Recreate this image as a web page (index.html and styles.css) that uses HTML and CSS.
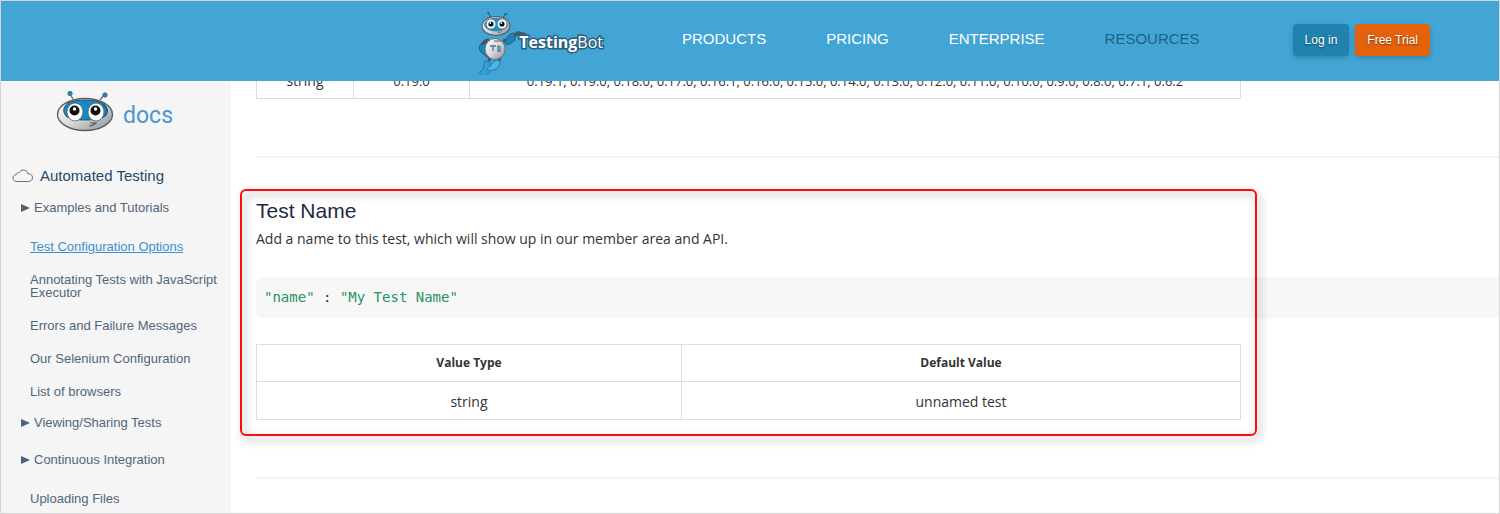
FILE: index.html
```html
<!DOCTYPE html>
<html lang="en">
<head>
<meta charset="utf-8">
<title>TestingBot docs - Test Name</title>
<link rel="stylesheet" href="styles.css">
</head>
<body>
<div class="frame">
  <header class="topbar">
    <a class="brand" href="#">
      <svg class="brand-bot" width="50" height="66" viewBox="2 0 50 66" aria-hidden="true">
        <defs>
          <linearGradient id="metal" x1="0" y1="0" x2="1" y2="1"><stop offset="0" stop-color="#fff"/><stop offset=".5" stop-color="#d8dadb"/><stop offset="1" stop-color="#898f93"/></linearGradient>
        </defs>
        <g fill="none" stroke="#4a5a64" stroke-width="1.2"><path d="M15 9 13 5M27 9l2-4"/></g>
        <circle cx="12.500" cy="4" r="1.300" fill="#286f98"/><circle cx="30" cy="5" r="1.300" fill="#286f98"/>
        <path d="M13 31c-4 1-7 4-7 7" fill="none" stroke="#435662" stroke-width="4"/>
        <path d="M5 35c-3 2-2 7 1 9l6 5c1-3-1-8-2-13z" fill="#1c83bd" stroke="#3c5868"/>
        <path d="M27 31c4 2 7 1 9-2l6-5 8 2" fill="none" stroke="#435662" stroke-width="3.500"/>
        <path d="M29 35c3 2 7-1 10-4l-1-7c-5 0-8 5-9 11z" fill="#1c83bd" stroke="#3c5868"/>
        <path d="M14 48l-1 4M24 48l-1 4" stroke="#435662" stroke-width="3"/>
        <ellipse cx="19" cy="40" rx="10" ry="10.500" fill="url(#metal)" stroke="#69747b"/>
        <path d="M14 37h6m-3 0v5m5-5v5h2v-4z" fill="none" stroke="#427b99" stroke-width="1.300"/>
        <path d="M18 32h7" stroke="#5a6166"/>
        <path d="M8 53c4-2 7 0 6 3l-1 5c2 1 0 5-4 6-4 0-6-2-5-4s4-2 4-5z" fill="#29a3e0" stroke="#3c6f8d"/>
        <path d="M18 52c4-2 7 0 6 3s-3 4-4 5-5 2-8 1c-2-1 0-3 2-4z" fill="#42b6ee" stroke="#3c6f8d"/>
        <ellipse cx="20" cy="17" rx="14" ry="9.500" fill="url(#metal)" stroke="#505c63" stroke-width="1.200"/>
        <ellipse cx="20" cy="15.500" rx="11.500" ry="6.500" fill="#238fc5" stroke="#52646f" stroke-width=".7"/>
        <circle cx="15" cy="15" r="4.500" fill="#fff"/><circle cx="26" cy="15" r="4.500" fill="#fff"/>
        <circle cx="15" cy="15" r="2.600" fill="#111"/><circle cx="26" cy="15" r="2.600" fill="#111"/>
        <circle cx="14.300" cy="14" r=".9" fill="#fff"/><circle cx="25.300" cy="14" r=".9" fill="#fff"/>
        <path d="M22 23.500c2 0 3-1 4-2" stroke="#777" fill="none"/>
      </svg>
      <span class="brand-name"><b>Testing</b>Bot</span>
    </a>
    <nav class="menu" aria-label="Main">
      <a href="#">PRODUCTS</a>
      <a href="#">PRICING</a>
      <a href="#">ENTERPRISE</a>
      <a class="current" href="#">RESOURCES</a>
    </nav>
    <div class="account">
      <button class="btn btn-login" type="button">Log in</button>
      <button class="btn btn-trial" type="button">Free Trial</button>
    </div>
  </header>

  <div class="layout">
    <aside class="sidebar">
      <a class="docs-home" href="#">
        <svg width="58" height="42" viewBox="0 0 58 42" aria-hidden="true">
          <path d="M17 9 14 4M44 10l4-5" fill="none" stroke="#68737a" stroke-width="1.400"/>
          <circle cx="14" cy="3.500" r="2.200" fill="#1c8cc4" stroke="#4d5b63" stroke-width=".8"/>
          <circle cx="49" cy="5" r="2.200" fill="#1c8cc4" stroke="#4d5b63" stroke-width=".8"/>
          <ellipse cx="29" cy="24.500" rx="27.500" ry="16" fill="url(#metal)" stroke="#575f64" stroke-width="1.400"/>
          <path d="M12 13C20 9 38 9 46 13c6 4 6 9 2 14-9 4-29 4-37 0-5-5-4-10 1-14z" fill="#178ac4" stroke="#3c4d57"/>
          <path d="M47 14c5 4 5 8 2 12" fill="none" stroke="#1a5d85" stroke-width="2"/>
          <ellipse cx="19" cy="22" rx="8" ry="9" fill="#fff" stroke="#56616a" stroke-width=".8"/>
          <ellipse cx="40" cy="22" rx="8" ry="9" fill="#fff" stroke="#56616a" stroke-width=".8"/>
          <circle cx="18.500" cy="20.500" r="5" fill="#111"/><circle cx="39.500" cy="20.500" r="5" fill="#111"/>
          <circle cx="18.500" cy="19" r="1.700" fill="#fff"/><circle cx="39.500" cy="19" r="1.700" fill="#fff"/>
          <path d="M33 36c3 0 5-1 7-3m-6 0 7 0" fill="none" stroke="#555" stroke-width="1.100"/>
        </svg>
        <span>docs</span>
      </a>
      <h2 class="group-title">
        <svg width="22" height="14" viewBox="0 0 22 14" aria-hidden="true"><path d="M5 12.500C2.500 12.500 1 11 1 9s1.500-3.300 3.300-3.300C4.600 4 6 3.300 7.300 3.700 8 2 9.500 1 11.500 1c2.300 0 4 1.500 4.300 3.700 2.700-.2 4.700 1.500 4.700 3.900s-1.700 3.900-4 3.900z" fill="none" stroke="#5f7488" stroke-width="1"/></svg>
        <a href="#">Automated Testing</a>
      </h2>
      <details class="branch" open>
        <summary><svg width="9" height="8" viewBox="0 0 9 8" aria-hidden="true"><path d="M0 0 9 4 0 8z"/></svg>Examples and Tutorials</summary>
        <ul class="pages">
          <li><a class="active" href="#">Test Configuration Options</a></li>
          <li><a href="#">Annotating Tests with JavaScript Executor</a></li>
          <li><a href="#">Errors and Failure Messages</a></li>
          <li><a href="#">Our Selenium Configuration</a></li>
          <li><a href="#">List of browsers</a></li>
        </ul>
      </details>
      <details class="branch">
        <summary><svg width="9" height="8" viewBox="0 0 9 8" aria-hidden="true"><path d="M0 0 9 4 0 8z"/></svg>Viewing/Sharing Tests</summary>
      </details>
      <details class="branch">
        <summary><svg width="9" height="8" viewBox="0 0 9 8" aria-hidden="true"><path d="M0 0 9 4 0 8z"/></svg>Continuous Integration</summary>
      </details>
      <ul class="pages pages-last">
        <li><a href="#">Uploading Files</a></li>
      </ul>
    </aside>

    <main class="content">
      <table class="values values-scrolled">
        <colgroup><col class="col-type"><col class="col-default"><col></colgroup>
        <tbody>
          <tr><td>string</td><td class="versions">0.19.0</td><td class="versions">0.19.1, 0.19.0, 0.18.0, 0.17.0, 0.16.1, 0.16.0, 0.15.0, 0.14.0, 0.13.0, 0.12.0, 0.11.0, 0.10.0, 0.9.0, 0.8.0, 0.7.1, 0.6.2</td></tr>
        </tbody>
      </table>
      <hr>
      <section class="option">
        <h1>Test Name</h1>
        <p>Add a name to this test, which will show up in our member area and API.</p>
        <pre class="code"><code><span>"name"</span> : <span>"My Test Name"</span></code></pre>
        <table class="values">
          <colgroup><col class="col-value"><col></colgroup>
          <thead><tr><th>Value Type</th><th>Default Value</th></tr></thead>
          <tbody><tr><td>string</td><td>unnamed test</td></tr></tbody>
        </table>
        <div class="callout"></div>
      </section>
      <hr>
    </main>
  </div>
</div>
</body>
</html>
```
FILE: styles.css
```css
* {
  box-sizing: border-box;
}

body {
  margin: 0;
  background: #fff;
  color: #333;
  font-family: "Liberation Sans", Arial, sans-serif;
}

a {
  color: inherit;
  text-decoration: none;
}

ul {
  margin: 0;
  padding: 0;
  list-style: none;
}

.frame {
  display: flex;
  flex-direction: column;
  min-height: 100vh;
  border: 1px solid #d5d5d5;
}

/* Top bar */
.topbar {
  position: relative;
  z-index: 2;
  display: flex;
  align-items: center;
  justify-content: flex-end;
  height: 80px;
  padding: 0 69px 2px 0;
  background: #42a5d5;
}

.brand {
  display: flex;
  align-items: center;
  margin-right: 79px;
  padding-top: 4px;
}

.brand-bot {
  margin-right: -9px;
}

.brand-name {
  color: #fff;
  font: 16px/20px "Open Sans", sans-serif;
  -webkit-text-stroke: 3px #2b5f7e;
  paint-order: stroke fill;
}

.menu {
  display: flex;
  gap: 60px;
  margin-right: 93px;
  padding-bottom: 2px;
  color: #fff;
  font-size: 15px;
  line-height: 20px;
}

.menu .current {
  color: #1b6285;
}

.account {
  display: flex;
  gap: 6px;
}

.btn {
  height: 32px;
  padding: 0 12px;
  border: 0;
  border-radius: 4px;
  color: #fff;
  font: 12px/32px "Liberation Sans", Arial, sans-serif;
  text-shadow: 0 1px 2px rgba(0, 0, 0, 0.5);
  box-shadow: 0 2px 5px rgba(0, 0, 0, 0.2);
}

.btn-login {
  background: #1f82af;
}

.btn-trial {
  background: #e4620b;
}

/* Body */
.layout {
  display: flex;
  flex: 1;
}

.sidebar {
  flex: none;
  width: 230px;
  background: #f5f5f5;
  color: #52667a;
  font-size: 13px;
}

.docs-home {
  display: flex;
  gap: 9px;
  padding: 9px 0 0 55px;
  color: #4a96d2;
  font: 23px/52px Roboto, sans-serif;
}

.group-title {
  display: flex;
  align-items: center;
  gap: 6px;
  margin: 24px 0 7px;
  padding-left: 11px;
  color: #234a6b;
  font-size: 15px;
  font-weight: 400;
  line-height: 20px;
}

.branch {
  margin-bottom: 7px;
}

.branch[open] {
  margin-bottom: 0;
}

.branch summary {
  display: flex;
  align-items: center;
  gap: 4px;
  padding-left: 20px;
  line-height: 30px;
  list-style: none;
}

.branch[open] summary {
  margin-bottom: 7px;
}

.branch svg {
  fill: #4d6275;
}

.pages a {
  display: block;
  padding: 10px 0 10px 29px;
  line-height: 13px;
}

.pages-last a {
  padding-bottom: 0;
}

.pages .active {
  color: #4190cd;
  text-decoration: underline;
}

.content {
  flex: 1;
  min-width: 0;
  padding-left: 25px;
  font-family: "Open Sans", "Noto Sans", sans-serif;
  font-size: 14px;
}

.content hr {
  height: 2px;
  margin: 0;
  border: 0;
  background: #f4f4f4;
}

.values {
  width: calc(100% - 258px);
  border-collapse: collapse;
  table-layout: fixed;
  line-height: 20px;
  text-align: center;
}

.values th,
.values td {
  height: 38px;
  padding: 2px 0 0;
  border: 1px solid #ddd;
}

.values th {
  height: 37px;
  padding: 0;
  font-size: 12px;
}

.values .versions {
  font-size: 13px;
}

/* The row above is partly scrolled under the top bar */
.values-scrolled {
  margin: -21px 0 57px;
}

.col-type {
  width: 97px;
}

.col-default {
  width: 116px;
}

.col-value {
  width: 425px;
}

.option {
  position: relative;
  padding: 41px 0 57px;
}

.option h1 {
  margin: 0;
  color: #1a2c42;
  font: 21px/24px "Liberation Sans", Arial, sans-serif;
}

.option p {
  margin: 4px 0 26px;
  line-height: 24px;
}

.code {
  margin: 0 0 26px;
  padding: 0 8px;
  border-radius: 6px 0 0 6px;
  background: #f7f7f7;
  font: 14px/41px "DejaVu Sans Mono", monospace;
}

.code code {
  font: inherit;
}

.code span {
  color: #2a9163;
}

.callout {
  position: absolute;
  top: 31px;
  right: 242px;
  bottom: 41px;
  left: -16px;
  border: 2px solid #f90d0d;
  border-radius: 6px;
  filter: drop-shadow(3px 4px 4px rgba(0, 0, 0, 0.4));
  pointer-events: none;
}
```
